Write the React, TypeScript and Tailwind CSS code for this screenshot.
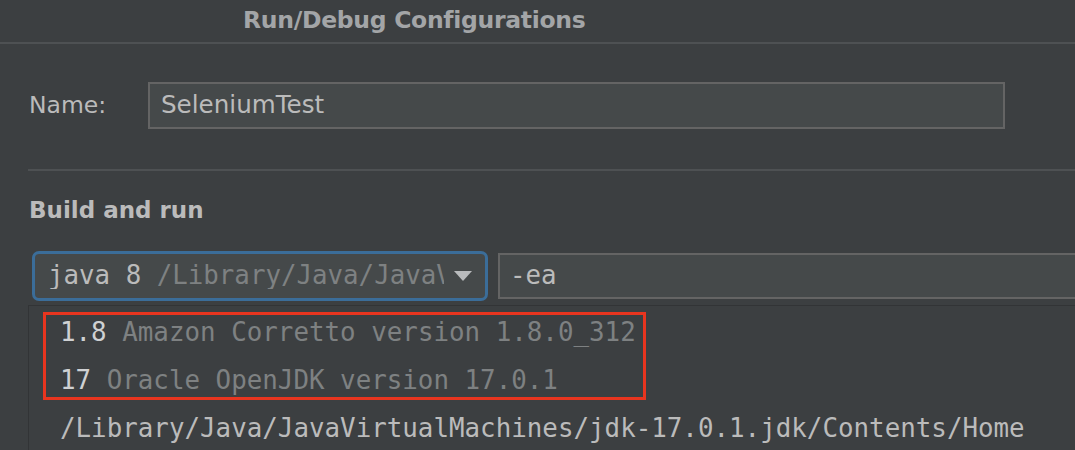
import React from 'react';

const mono = { fontFamily: '"DejaVu Sans Mono", "Liberation Mono", monospace' };

const jdks = [
  { version: '1.8', name: 'Amazon Corretto version 1.8.0_312' },
  { version: '17', name: 'Oracle OpenJDK version 17.0.1' },
];

export default function App() {
  return (
    <div
      className="w-[1075px] h-[450px] overflow-hidden bg-[#3c3f41] text-[#bbbbbb] flex flex-col"
      style={{ fontFamily: '"DejaVu Sans", "Noto Sans", sans-serif' }}
    >
      {/* Title bar */}
      <div className="h-[44px] shrink-0 flex items-center pl-[243px] border-b-2 border-[#4e5153]">
        <span className="text-[23.5px] font-bold text-[#a3a5a7] tracking-[-0.3px]">Run/Debug Configurations</span>
      </div>

      <div className="flex flex-col pl-[28px] flex-1 min-h-0">
        {/* Name */}
        <div className="flex items-center mt-[38px]">
          <span className="w-[120px] text-[23.5px] pl-[1px]">Name:</span>
          <div className="w-[857px] h-[47px] bg-[#45494a] border-2 border-[#646464] flex items-center px-[11px] text-[24.6px]">
            SeleniumTest
          </div>
        </div>

        <div className="mt-[40px] border-t-2 border-[#4e5153]" />

        <div className="mt-[25px] text-[23px] font-bold pl-[1px] leading-[28px]">Build and run</div>

        {/* JRE + VM options */}
        <div className="flex items-center mt-[27px] h-[50px]" style={mono}>
          <div className="ml-[4px] w-[456px] h-[50px] rounded-[7px] border-[3px] border-[#3b6d99] bg-[#45494a] flex items-center pl-[13px] pr-[13px]">
            <div className="flex-1 min-w-0 overflow-hidden whitespace-nowrap text-[25.8px] leading-none">
              <span className="text-[#bbbbbb]">java 8 </span>
              <span className="text-[#7e8182]">/Library/Java/JavaV</span>
            </div>
            <svg width="18" height="10" viewBox="0 0 18 10" className="ml-[10px] shrink-0">
              <path d="M0 0 L18 0 L9 10 Z" fill="#b9bbbd" />
            </svg>
          </div>
          <div className="ml-[10px] flex-1 h-[46px] bg-[#45494a] border-2 border-[#646464] border-r-0 flex items-center pl-[10px] text-[25.8px] leading-none">
            -ea
          </div>
        </div>

        {/* Popup list */}
        <div className="relative mt-[4px] flex-1 bg-[#3c3f41] border-l border-t border-[#323436] pt-[3px]" style={mono}>
          {jdks.map((j) => (
            <div key={j.version} className="h-[48px] flex items-center pl-[31px] whitespace-nowrap text-[25.85px] leading-none">
              <span className="text-[#cfd1d3]">{j.version}</span>
              <span className="text-[#7e8182]">&nbsp;{j.name}</span>
            </div>
          ))}
          <div className="h-[48px] flex items-center pl-[31px] whitespace-nowrap text-[25.85px] leading-none text-[#bbbbbb]">
            /Library/Java/JavaVirtualMachines/jdk-17.0.1.jdk/Contents/Home
          </div>

          {/* annotation box */}
          <div className="absolute left-[14px] top-[6px] w-[603px] h-[88px] border-[3px] border-[#e8351f] pointer-events-none" />
        </div>
      </div>
    </div>
  );
}
